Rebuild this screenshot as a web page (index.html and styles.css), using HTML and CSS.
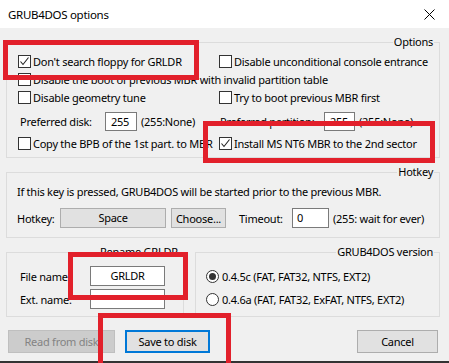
FILE: index.html
```html
<!DOCTYPE html>
<html lang="en">
<head>
  <meta charset="UTF-8" />
  <title>GRUB4DOS options</title>
  <link rel="stylesheet" href="styles.css">
</head>
<body>

  <!-- Window title bar -->
  <div class="titlebar">
    <span class="title">GRUB4DOS options</span>
    <svg class="close" width="11" height="11" viewBox="0 0 11 11">
      <path d="M0.5 0.5 L10.5 10.5 M10.5 0.5 L0.5 10.5" stroke="#000" stroke-width="1" fill="none"/>
    </svg>
  </div>

  <div class="dialog">

    <!-- Options -->
    <div class="group">
      <div class="group-title">Options</div>
      <div class="options-grid">
        <label class="check"><span class="box"><svg width="11" height="11" viewBox="0 0 11 11"><path d="M1.5 5.5 L4 8.5 L9.5 1.5" stroke="#222" stroke-width="1.1" fill="none"/></svg></span>Don't search floppy for GRLDR</label>
        <label class="check"><span class="box"></span>Disable unconditional console entrance</label>
        <label class="check wide"><span class="box"></span>Disable the boot of previous MBR with invalid partition table</label>
        <label class="check"><span class="box"></span>Disable geometry tune</label>
        <label class="check"><span class="box"></span>Try to boot previous MBR first</label>
        <div class="field">
          <span class="field-label disk-label">Preferred disk:</span>
          <span class="num">255</span>
          <span class="note">(255:None)</span>
        </div>
        <div class="field">
          <span class="field-label part-label">Preferred partition:</span>
          <span class="num part-num">255</span>
          <span class="note">(255:None)</span>
        </div>
        <label class="check"><span class="box"></span>Copy the BPB of the 1st part. to MBR</label>
        <label class="check"><span class="box"><svg width="11" height="11" viewBox="0 0 11 11"><path d="M1.5 5.5 L4 8.5 L9.5 1.5" stroke="#222" stroke-width="1.1" fill="none"/></svg></span>Install MS NT6 MBR to the 2nd sector</label>
      </div>
    </div>

    <!-- Hotkey -->
    <div class="group hotkey">
      <div class="group-title">Hotkey</div>
      <div class="hotkey-body">
        <div class="hotkey-text">If this key is pressed, GRUB4DOS will be started prior to the previous MBR.</div>
        <div class="hotkey-row">
          <span class="hotkey-label">Hotkey:</span>
          <span class="keybox">Space</span>
          <button class="btn choose">Choose...</button>
          <span class="timeout-label">Timeout:</span>
          <span class="num timeout-num">0</span>
          <span class="note">(255: wait for ever)</span>
        </div>
      </div>
    </div>

    <div class="bottom-groups">
      <!-- Rename GRLDR -->
      <div class="group rename">
        <div class="group-title">Rename GRLDR</div>
        <div class="rename-body">
          <div class="rename-row">
            <span class="rename-label">File name:</span>
            <span class="textbox centered">GRLDR</span>
          </div>
          <div class="rename-row">
            <span class="rename-label">Ext. name:</span>
            <span class="textbox"></span>
          </div>
        </div>
      </div>

      <!-- GRUB4DOS version -->
      <div class="group version">
        <div class="group-title">GRUB4DOS version</div>
        <div class="version-body">
          <label class="radio-row"><span class="radio on"></span>0.4.5c (FAT, FAT32, NTFS, EXT2)</label>
          <label class="radio-row"><span class="radio"></span>0.4.6a (FAT, FAT32, ExFAT, NTFS, EXT2)</label>
        </div>
      </div>
    </div>

    <div class="buttons">
      <button class="btn read" disabled>Read from disk</button>
      <button class="btn save">Save to disk</button>
      <button class="btn cancel">Cancel</button>
    </div>

    <div class="under-edge"></div>
  </div>

  <!-- red highlight marks drawn over the dialog -->
  <div class="mark mark-1"></div>
  <div class="mark mark-2"></div>
  <div class="mark mark-3"></div>
  <div class="mark mark-4"></div>

</body>
</html>
```

FILE: styles.css
```css
* {
  box-sizing: border-box;
}

html, body {
  margin: 0;
  padding: 0;
}

body {
  position: relative;
  width: 449px;
  height: 363px;
  overflow: hidden;
  background: #f0f0f0;
  color: #000;
  font-family: "Noto Sans", "Open Sans", sans-serif;
  font-size: 11px;
  letter-spacing: -0.25px;
}

/* Title bar */
.titlebar {
  height: 28px;
  background: #fff;
  display: flex;
  align-items: center;
  justify-content: space-between;
  padding: 0 14px 0 8px;
}

.title {
  font-size: 11.5px;
  letter-spacing: -0.3px;
}

.close {
  display: block;
}

/* Dialog body */
.dialog {
  padding: 14px 9px 0 6px;
}

.group {
  border: 1px solid #dcdcdc;
  display: flex;
  flex-direction: column;
}

.group-title {
  height: 14px;
  line-height: 14px;
  margin: -8px 5px -6px auto;
  padding: 0 1px;
  background: #f0f0f0;
  white-space: nowrap;
}

/* Options */
.options-grid {
  display: grid;
  grid-template-columns: 201px 1fr;
  grid-template-rows: 18px 19px 17px 30px 14px;
  padding: 9px 0 7px 11px;
}

.check {
  display: flex;
  align-items: center;
  white-space: nowrap;
}

.check.wide {
  grid-column: 1 / 3;
}

.box {
  width: 13px;
  height: 13px;
  border: 1px solid #333;
  background: #fff;
  margin-right: 2px;
  flex: none;
  display: flex;
  align-items: center;
  justify-content: center;
}

.box svg {
  display: block;
}

.field {
  display: flex;
  align-items: center;
  white-space: nowrap;
}

.field-label {
  flex: none;
}

.disk-label {
  width: 87px;
  padding-left: 2px;
}

.part-label {
  width: 105px;
  padding-left: 1px;
}

.num {
  height: 19px;
  width: 32px;
  line-height: 17px;
  border: 1px solid #7a7a7a;
  background: #fff;
  padding-left: 5px;
  flex: none;
}

.part-num {
  width: 31px;
}

.note {
  margin-left: 4px;
  white-space: nowrap;
}

/* Hotkey */
.hotkey {
  margin-top: 14px;
}

.hotkey-body {
  padding: 12px 10px 9px 10px;
}

.hotkey-text {
  height: 14px;
  line-height: 14px;
  white-space: nowrap;
}

.hotkey-row {
  margin-top: 9px;
  height: 20px;
  display: flex;
  align-items: center;
}

.hotkey-label {
  width: 43px;
}

.keybox {
  width: 106px;
  height: 20px;
  line-height: 18px;
  text-align: center;
  background: #e1e1e1;
  border: 1px solid #adadad;
}

.btn {
  font: inherit;
  letter-spacing: inherit;
  color: #000;
  background: #e1e1e1;
  border: 1px solid #adadad;
  padding: 0;
  margin: 0;
  border-radius: 0;
}

.choose {
  width: 55px;
  height: 20px;
  margin-left: 5px;
}

.timeout-label {
  width: 53px;
  margin-left: 13px;
}

.timeout-num {
  width: 37px;
  height: 20px;
  line-height: 18px;
  padding-left: 4px;
}

/* Rename + version */
.bottom-groups {
  margin-top: 14px;
  display: flex;
}

.rename {
  width: 178px;
}

.rename .group-title {
  margin-left: 92px;
  margin-right: auto;
}

.rename-body {
  padding: 13px 0 7px 13px;
}

.rename-row {
  height: 20px;
  display: flex;
  align-items: center;
}

.rename-row + .rename-row {
  margin-top: 3px;
}

.rename-label {
  width: 70px;
}

.textbox {
  width: 75px;
  height: 20px;
  line-height: 18px;
  border: 1px solid #7a7a7a;
  background: #fff;
}

.textbox.centered {
  text-align: center;
}

.version {
  flex: 1;
  margin-left: 11px;
}

.version-body {
  padding: 13px 0 7px 10px;
}

.radio-row {
  height: 20px;
  display: flex;
  align-items: center;
  white-space: nowrap;
}

.radio-row + .radio-row {
  margin-top: 3px;
}

.radio {
  width: 13px;
  height: 13px;
  border: 1px solid #333;
  border-radius: 50%;
  background: #fff;
  margin-right: 3px;
  display: flex;
  align-items: center;
  justify-content: center;
}

.radio.on::after {
  content: "";
  width: 7px;
  height: 7px;
  border-radius: 50%;
  background: #333;
}

/* Buttons */
.buttons {
  margin-top: 13px;
  height: 23px;
  display: flex;
}

.buttons .btn {
  height: 23px;
}

.read {
  width: 107px;
  margin-left: 2px;
  background: #cccccc;
  border-color: #bfbfbf;
  color: #838383;
}

.save {
  width: 85px;
  margin-left: 10px;
  border: 2px solid #0078d7;
}

.cancel {
  width: 81px;
  margin-left: auto;
  margin-right: 2px;
}

.under-edge {
  margin: 8px -9px 0 -6px;
  height: 2px;
  background: #333;
}

/* Red highlight marks */
.mark {
  position: absolute;
  border: 5px solid #e2202b;
}

.mark-1 { left: 3px; top: 40px; width: 196px; height: 40px; }
.mark-2 { left: 203px; top: 121px; width: 232px; height: 42px; }
.mark-3 { left: 68px; top: 252px; width: 120px; height: 48px; }
.mark-4 { left: 98px; top: 313px; width: 133px; height: 60px; }
```
